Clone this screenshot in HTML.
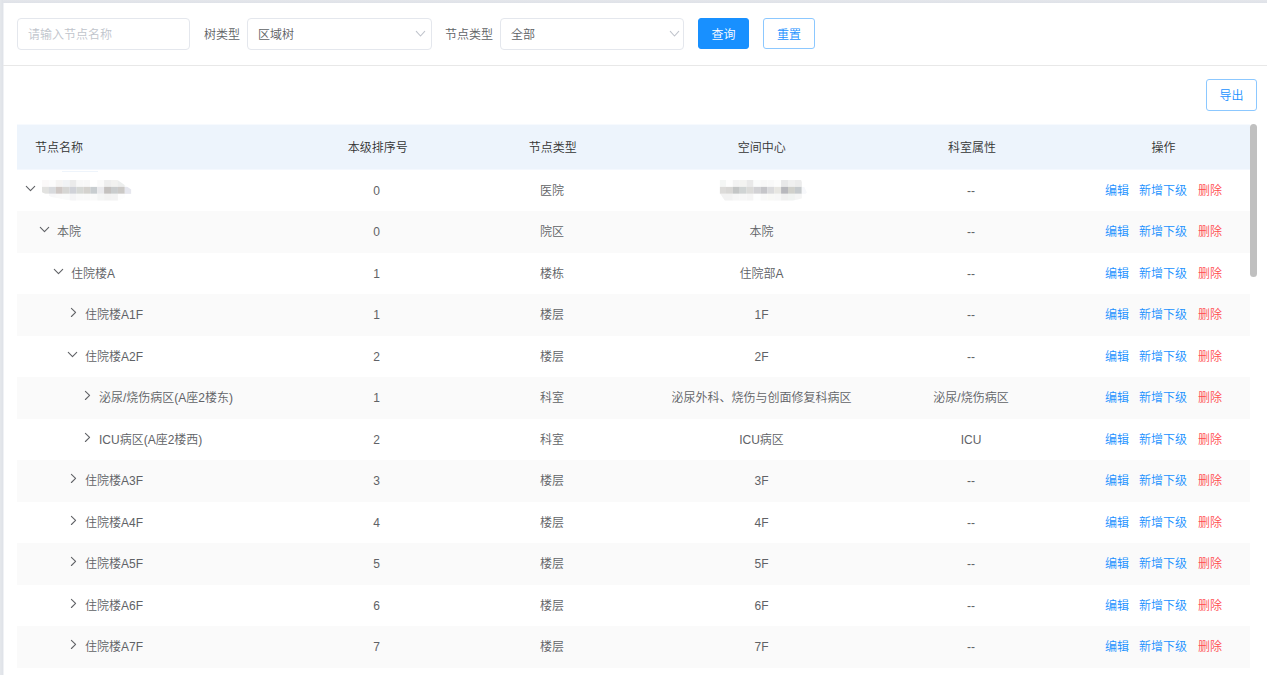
<!DOCTYPE html><html lang="zh-CN"><head><meta charset="utf-8"><title>节点管理</title><style>
*{box-sizing:border-box;margin:0;padding:0}
html,body{width:1267px;height:675px;overflow:hidden;background:#fff}
body{position:relative;font-family:"Liberation Sans","Noto Sans CJK SC DemiLight","Noto Sans CJK SC",sans-serif;font-size:12px;color:#606266;line-height:1}
.abs{position:absolute}
.topbar{left:0;top:0;width:1267px;height:3px;background:linear-gradient(to bottom,#e4e6eb,#dfe2e8)}
.leftbar{left:0;top:0;width:3px;height:675px;background:linear-gradient(to right,#e5e8ec,#dfe2e8)}
.leftbar2{left:3px;top:3px;width:1px;height:672px;background:#f0f2f5}
.inp{top:18px;height:32px;padding-top:1px;border:1px solid #e4e7ed;border-radius:4px;background:#fff;line-height:30px;padding-left:10px;color:#606266;white-space:nowrap}
.ph{color:#c0c4cc}
.lbl{top:19px;height:32px;line-height:32px;color:#606266;white-space:nowrap}
.btn{height:32px;padding-top:1px;border-radius:3px;line-height:30px;text-align:center;white-space:nowrap}
.btn.pri{background:#1890ff;border:1px solid #1890ff;color:#fff}
.btn.pl{background:#fff;border:1px solid #8cc8ff;color:#1890ff}
.divider{left:3px;top:65px;width:1264px;height:1px;background:#e8e8e8}
.th{top:125.5px;height:45px;line-height:45px;color:#333;white-space:nowrap}
.thbg{left:17px;top:125px;width:1233px;height:44px;background:#edf4fc}
.row{left:17px;width:1233px;height:41.5px}
.row.odd{background:#fafafa}
.c{height:41.5px;line-height:41.5px;text-align:center;white-space:nowrap;top:1.4px}
.nm{height:41.5px;line-height:41.5px;white-space:nowrap;top:1.4px}
.a{color:#1890ff}
.d{color:#ff4d4f}
.thumb{left:1250px;top:124px;width:7px;height:153px;border-radius:3.5px;background:#c0c0c0}
svg{position:absolute;overflow:visible}
</style></head><body>
<div class="abs topbar"></div><div class="abs leftbar"></div><div class="abs leftbar2"></div>
<div class="abs inp ph" style="left:17px;width:173px">请输入节点名称</div>
<div class="abs lbl" style="left:204px">树类型</div>
<div class="abs inp" style="left:247px;width:185px">区域树</div>
<svg class="abs" style="left:416.2px;top:30.7px" width="9" height="6" viewBox="0 0 9 6"><path d="M0.3 0.4 L4.5 5 L8.7 0.4" fill="none" stroke="#c0c4cc" stroke-width="1.1" stroke-linecap="round" stroke-linejoin="round"/></svg>
<div class="abs lbl" style="left:445px">节点类型</div>
<div class="abs inp" style="left:500px;width:184px">全部</div>
<svg class="abs" style="left:669.7px;top:30.7px" width="9" height="6" viewBox="0 0 9 6"><path d="M0.3 0.4 L4.5 5 L8.7 0.4" fill="none" stroke="#c0c4cc" stroke-width="1.1" stroke-linecap="round" stroke-linejoin="round"/></svg>
<div class="abs btn pri" style="left:698px;top:18px;width:51px;height:31px;line-height:30px">查询</div>
<div class="abs btn pl" style="left:763px;top:18px;width:52px;height:31px;line-height:30px">重置</div>
<div class="abs divider"></div>
<div class="abs btn pl" style="left:1206px;top:79px;width:51px">导出</div>
<div class="abs thbg"></div><div class="abs" style="left:17px;top:124px;width:1233px;height:1px;background:#f7fafe"></div><div class="abs" style="left:17px;top:169px;width:1233px;height:1px;background:#f4f8fe"></div>
<div class="abs th" style="left:35px">节点名称</div>
<div class="abs th" style="left:307.0px;width:141.5px;text-align:center">本级排序号</div>
<div class="abs th" style="left:448.0px;width:209.5px;text-align:center">节点类型</div>
<div class="abs th" style="left:657.0px;width:209.5px;text-align:center">空间中心</div>
<div class="abs th" style="left:867.25px;width:209.5px;text-align:center">科室属性</div>
<div class="abs th" style="left:1076.25px;width:174.5px;text-align:center">操作</div>
<div class="abs row" style="top:169.5px">
<svg class="abs" style="left:8.5px;top:16px" width="9" height="5.6" viewBox="0 0 9 5.6"><path d="M0.3 0.4 L4.5 4.6 L8.7 0.4" fill="none" stroke="#606266" stroke-width="1.1" stroke-linecap="round" stroke-linejoin="round"/></svg>
<div class="abs c" style="left:288.75px;width:141.5px">0</div>
<div class="abs c" style="left:430.25px;width:209.5px">医院</div>
<div class="abs c" style="left:849.25px;width:209.5px">--</div>
<div class="abs c" style="left:1059.25px;width:174.5px"><span class="a">编辑</span><span class="a" style="margin-left:10px">新增下级</span><span class="d" style="margin-left:11px">删除</span></div>
</div>
<div class="abs row odd" style="top:211.0px">
<svg class="abs" style="left:22.5px;top:16px" width="9" height="5.6" viewBox="0 0 9 5.6"><path d="M0.3 0.4 L4.5 4.6 L8.7 0.4" fill="none" stroke="#606266" stroke-width="1.1" stroke-linecap="round" stroke-linejoin="round"/></svg>
<div class="abs nm" style="left:40.0px">本院</div>
<div class="abs c" style="left:288.75px;width:141.5px">0</div>
<div class="abs c" style="left:430.25px;width:209.5px">院区</div>
<div class="abs c" style="left:639.75px;width:209.5px">本院</div>
<div class="abs c" style="left:849.25px;width:209.5px">--</div>
<div class="abs c" style="left:1059.25px;width:174.5px"><span class="a">编辑</span><span class="a" style="margin-left:10px">新增下级</span><span class="d" style="margin-left:11px">删除</span></div>
</div>
<div class="abs row" style="top:252.5px">
<svg class="abs" style="left:36.5px;top:16px" width="9" height="5.6" viewBox="0 0 9 5.6"><path d="M0.3 0.4 L4.5 4.6 L8.7 0.4" fill="none" stroke="#606266" stroke-width="1.1" stroke-linecap="round" stroke-linejoin="round"/></svg>
<div class="abs nm" style="left:54.0px">住院楼A</div>
<div class="abs c" style="left:288.75px;width:141.5px">1</div>
<div class="abs c" style="left:430.25px;width:209.5px">楼栋</div>
<div class="abs c" style="left:639.75px;width:209.5px">住院部A</div>
<div class="abs c" style="left:849.25px;width:209.5px">--</div>
<div class="abs c" style="left:1059.25px;width:174.5px"><span class="a">编辑</span><span class="a" style="margin-left:10px">新增下级</span><span class="d" style="margin-left:11px">删除</span></div>
</div>
<div class="abs row odd" style="top:294.0px">
<svg class="abs" style="left:54.1px;top:14.2px" width="5.6" height="8.8" viewBox="0 0 5.6 8.8"><path d="M0.4 0.3 L4.6 4.4 L0.4 8.5" fill="none" stroke="#606266" stroke-width="1.1" stroke-linecap="round" stroke-linejoin="round"/></svg>
<div class="abs nm" style="left:68.0px">住院楼A1F</div>
<div class="abs c" style="left:288.75px;width:141.5px">1</div>
<div class="abs c" style="left:430.25px;width:209.5px">楼层</div>
<div class="abs c" style="left:639.75px;width:209.5px">1F</div>
<div class="abs c" style="left:849.25px;width:209.5px">--</div>
<div class="abs c" style="left:1059.25px;width:174.5px"><span class="a">编辑</span><span class="a" style="margin-left:10px">新增下级</span><span class="d" style="margin-left:11px">删除</span></div>
</div>
<div class="abs row" style="top:335.5px">
<svg class="abs" style="left:50.5px;top:16px" width="9" height="5.6" viewBox="0 0 9 5.6"><path d="M0.3 0.4 L4.5 4.6 L8.7 0.4" fill="none" stroke="#606266" stroke-width="1.1" stroke-linecap="round" stroke-linejoin="round"/></svg>
<div class="abs nm" style="left:68.0px">住院楼A2F</div>
<div class="abs c" style="left:288.75px;width:141.5px">2</div>
<div class="abs c" style="left:430.25px;width:209.5px">楼层</div>
<div class="abs c" style="left:639.75px;width:209.5px">2F</div>
<div class="abs c" style="left:849.25px;width:209.5px">--</div>
<div class="abs c" style="left:1059.25px;width:174.5px"><span class="a">编辑</span><span class="a" style="margin-left:10px">新增下级</span><span class="d" style="margin-left:11px">删除</span></div>
</div>
<div class="abs row odd" style="top:377.0px">
<svg class="abs" style="left:68.1px;top:14.2px" width="5.6" height="8.8" viewBox="0 0 5.6 8.8"><path d="M0.4 0.3 L4.6 4.4 L0.4 8.5" fill="none" stroke="#606266" stroke-width="1.1" stroke-linecap="round" stroke-linejoin="round"/></svg>
<div class="abs nm" style="left:82.0px">泌尿/烧伤病区(A座2楼东)</div>
<div class="abs c" style="left:288.75px;width:141.5px">1</div>
<div class="abs c" style="left:430.25px;width:209.5px">科室</div>
<div class="abs c" style="left:639.75px;width:209.5px">泌尿外科、烧伤与创面修复科病区</div>
<div class="abs c" style="left:849.25px;width:209.5px">泌尿/烧伤病区</div>
<div class="abs c" style="left:1059.25px;width:174.5px"><span class="a">编辑</span><span class="a" style="margin-left:10px">新增下级</span><span class="d" style="margin-left:11px">删除</span></div>
</div>
<div class="abs row" style="top:418.5px">
<svg class="abs" style="left:68.1px;top:14.2px" width="5.6" height="8.8" viewBox="0 0 5.6 8.8"><path d="M0.4 0.3 L4.6 4.4 L0.4 8.5" fill="none" stroke="#606266" stroke-width="1.1" stroke-linecap="round" stroke-linejoin="round"/></svg>
<div class="abs nm" style="left:82.0px">ICU病区(A座2楼西)</div>
<div class="abs c" style="left:288.75px;width:141.5px">2</div>
<div class="abs c" style="left:430.25px;width:209.5px">科室</div>
<div class="abs c" style="left:639.75px;width:209.5px">ICU病区</div>
<div class="abs c" style="left:849.25px;width:209.5px">ICU</div>
<div class="abs c" style="left:1059.25px;width:174.5px"><span class="a">编辑</span><span class="a" style="margin-left:10px">新增下级</span><span class="d" style="margin-left:11px">删除</span></div>
</div>
<div class="abs row odd" style="top:460.0px">
<svg class="abs" style="left:54.1px;top:14.2px" width="5.6" height="8.8" viewBox="0 0 5.6 8.8"><path d="M0.4 0.3 L4.6 4.4 L0.4 8.5" fill="none" stroke="#606266" stroke-width="1.1" stroke-linecap="round" stroke-linejoin="round"/></svg>
<div class="abs nm" style="left:68.0px">住院楼A3F</div>
<div class="abs c" style="left:288.75px;width:141.5px">3</div>
<div class="abs c" style="left:430.25px;width:209.5px">楼层</div>
<div class="abs c" style="left:639.75px;width:209.5px">3F</div>
<div class="abs c" style="left:849.25px;width:209.5px">--</div>
<div class="abs c" style="left:1059.25px;width:174.5px"><span class="a">编辑</span><span class="a" style="margin-left:10px">新增下级</span><span class="d" style="margin-left:11px">删除</span></div>
</div>
<div class="abs row" style="top:501.5px">
<svg class="abs" style="left:54.1px;top:14.2px" width="5.6" height="8.8" viewBox="0 0 5.6 8.8"><path d="M0.4 0.3 L4.6 4.4 L0.4 8.5" fill="none" stroke="#606266" stroke-width="1.1" stroke-linecap="round" stroke-linejoin="round"/></svg>
<div class="abs nm" style="left:68.0px">住院楼A4F</div>
<div class="abs c" style="left:288.75px;width:141.5px">4</div>
<div class="abs c" style="left:430.25px;width:209.5px">楼层</div>
<div class="abs c" style="left:639.75px;width:209.5px">4F</div>
<div class="abs c" style="left:849.25px;width:209.5px">--</div>
<div class="abs c" style="left:1059.25px;width:174.5px"><span class="a">编辑</span><span class="a" style="margin-left:10px">新增下级</span><span class="d" style="margin-left:11px">删除</span></div>
</div>
<div class="abs row odd" style="top:543.0px">
<svg class="abs" style="left:54.1px;top:14.2px" width="5.6" height="8.8" viewBox="0 0 5.6 8.8"><path d="M0.4 0.3 L4.6 4.4 L0.4 8.5" fill="none" stroke="#606266" stroke-width="1.1" stroke-linecap="round" stroke-linejoin="round"/></svg>
<div class="abs nm" style="left:68.0px">住院楼A5F</div>
<div class="abs c" style="left:288.75px;width:141.5px">5</div>
<div class="abs c" style="left:430.25px;width:209.5px">楼层</div>
<div class="abs c" style="left:639.75px;width:209.5px">5F</div>
<div class="abs c" style="left:849.25px;width:209.5px">--</div>
<div class="abs c" style="left:1059.25px;width:174.5px"><span class="a">编辑</span><span class="a" style="margin-left:10px">新增下级</span><span class="d" style="margin-left:11px">删除</span></div>
</div>
<div class="abs row" style="top:584.5px">
<svg class="abs" style="left:54.1px;top:14.2px" width="5.6" height="8.8" viewBox="0 0 5.6 8.8"><path d="M0.4 0.3 L4.6 4.4 L0.4 8.5" fill="none" stroke="#606266" stroke-width="1.1" stroke-linecap="round" stroke-linejoin="round"/></svg>
<div class="abs nm" style="left:68.0px">住院楼A6F</div>
<div class="abs c" style="left:288.75px;width:141.5px">6</div>
<div class="abs c" style="left:430.25px;width:209.5px">楼层</div>
<div class="abs c" style="left:639.75px;width:209.5px">6F</div>
<div class="abs c" style="left:849.25px;width:209.5px">--</div>
<div class="abs c" style="left:1059.25px;width:174.5px"><span class="a">编辑</span><span class="a" style="margin-left:10px">新增下级</span><span class="d" style="margin-left:11px">删除</span></div>
</div>
<div class="abs row odd" style="top:626.0px">
<svg class="abs" style="left:54.1px;top:14.2px" width="5.6" height="8.8" viewBox="0 0 5.6 8.8"><path d="M0.4 0.3 L4.6 4.4 L0.4 8.5" fill="none" stroke="#606266" stroke-width="1.1" stroke-linecap="round" stroke-linejoin="round"/></svg>
<div class="abs nm" style="left:68.0px">住院楼A7F</div>
<div class="abs c" style="left:288.75px;width:141.5px">7</div>
<div class="abs c" style="left:430.25px;width:209.5px">楼层</div>
<div class="abs c" style="left:639.75px;width:209.5px">7F</div>
<div class="abs c" style="left:849.25px;width:209.5px">--</div>
<div class="abs c" style="left:1059.25px;width:174.5px"><span class="a">编辑</span><span class="a" style="margin-left:10px">新增下级</span><span class="d" style="margin-left:11px">删除</span></div>
</div>
<svg class="abs" style="left:41.5px;top:180px;clip-path:polygon(0 0,76px 0,89.7px 9.5px,89.7px 14.5px,77px 20.7px,30px 20.7px,10px 17px,0 12px)" width="89.70" height="20.70" viewBox="0 0 89.70 20.70"><rect x="0.00" y="0.00" width="6.95" height="6.95" fill="#fbf9f9"/><rect x="6.90" y="0.00" width="6.95" height="6.95" fill="#fcfcfc"/><rect x="13.80" y="0.00" width="6.95" height="6.95" fill="#f5f4f3"/><rect x="20.70" y="0.00" width="6.95" height="6.95" fill="#f1f3f5"/><rect x="27.60" y="0.00" width="6.95" height="6.95" fill="#ebebeb"/><rect x="34.50" y="0.00" width="6.95" height="6.95" fill="#f8f8f8"/><rect x="41.40" y="0.00" width="6.95" height="6.95" fill="#f8f8f8"/><rect x="48.30" y="0.00" width="6.95" height="6.95" fill="#ffffff"/><rect x="55.20" y="0.00" width="6.95" height="6.95" fill="#fafafa"/><rect x="62.10" y="0.00" width="6.95" height="6.95" fill="#eeeeee"/><rect x="69.00" y="0.00" width="6.95" height="6.95" fill="#f2f2f0"/><rect x="75.90" y="0.00" width="6.95" height="6.95" fill="#eceeed"/><rect x="82.80" y="0.00" width="6.95" height="6.95" fill="#fbfcfc"/><rect x="0.00" y="6.90" width="6.95" height="6.95" fill="#e2e2e0"/><rect x="6.90" y="6.90" width="6.95" height="6.95" fill="#d8dadd"/><rect x="13.80" y="6.90" width="6.95" height="6.95" fill="#cfc8c5"/><rect x="20.70" y="6.90" width="6.95" height="6.95" fill="#d6d6d4"/><rect x="27.60" y="6.90" width="6.95" height="6.95" fill="#d0d2d8"/><rect x="34.50" y="6.90" width="6.95" height="6.95" fill="#d6d8d5"/><rect x="41.40" y="6.90" width="6.95" height="6.95" fill="#d4d2ce"/><rect x="48.30" y="6.90" width="6.95" height="6.95" fill="#c8cdd0"/><rect x="55.20" y="6.90" width="6.95" height="6.95" fill="#e9e9ec"/><rect x="62.10" y="6.90" width="6.95" height="6.95" fill="#c4c1bf"/><rect x="69.00" y="6.90" width="6.95" height="6.95" fill="#c9cccd"/><rect x="75.90" y="6.90" width="6.95" height="6.95" fill="#cbc9c6"/><rect x="82.80" y="6.90" width="6.95" height="6.95" fill="#e6e7ee"/><rect x="0.00" y="13.80" width="6.95" height="6.95" fill="#ffffff"/><rect x="6.90" y="13.80" width="6.95" height="6.95" fill="#f8f8f9"/><rect x="13.80" y="13.80" width="6.95" height="6.95" fill="#fafafa"/><rect x="20.70" y="13.80" width="6.95" height="6.95" fill="#fafbfb"/><rect x="27.60" y="13.80" width="6.95" height="6.95" fill="#f5f5f6"/><rect x="34.50" y="13.80" width="6.95" height="6.95" fill="#f9f9f9"/><rect x="41.40" y="13.80" width="6.95" height="6.95" fill="#f9f9f9"/><rect x="48.30" y="13.80" width="6.95" height="6.95" fill="#fafafa"/><rect x="55.20" y="13.80" width="6.95" height="6.95" fill="#f4f5f5"/><rect x="62.10" y="13.80" width="6.95" height="6.95" fill="#f2f2f2"/><rect x="69.00" y="13.80" width="6.95" height="6.95" fill="#f3f3f3"/><rect x="75.90" y="13.80" width="6.95" height="6.95" fill="#fdfdfd"/></svg>
<svg class="abs" style="left:718.7px;top:180px;clip-path:polygon(1.2px 0,82.4px 0,88.2px 12.4px,83px 18.6px,74px 20.7px,6.2px 20.7px,1.2px 13.2px)" width="89.70" height="20.70" viewBox="0 0 89.70 20.70"><rect x="0.00" y="0.00" width="6.95" height="6.95" fill="#f4f6f5"/><rect x="6.90" y="0.00" width="6.95" height="6.95" fill="#fdfdfd"/><rect x="13.80" y="0.00" width="6.95" height="6.95" fill="#f3f3f3"/><rect x="20.70" y="0.00" width="6.95" height="6.95" fill="#f3f3f1"/><rect x="27.60" y="0.00" width="6.95" height="6.95" fill="#e9e9e9"/><rect x="34.50" y="0.00" width="6.95" height="6.95" fill="#fafbfb"/><rect x="41.40" y="0.00" width="6.95" height="6.95" fill="#f8f8f8"/><rect x="48.30" y="0.00" width="6.95" height="6.95" fill="#f9f9f9"/><rect x="55.20" y="0.00" width="6.95" height="6.95" fill="#fcfcfc"/><rect x="62.10" y="0.00" width="6.95" height="6.95" fill="#e8e8e9"/><rect x="69.00" y="0.00" width="6.95" height="6.95" fill="#f0f0f0"/><rect x="75.90" y="0.00" width="6.95" height="6.95" fill="#ececec"/><rect x="0.00" y="6.90" width="6.95" height="6.95" fill="#dcdbd9"/><rect x="6.90" y="6.90" width="6.95" height="6.95" fill="#d8d7d5"/><rect x="13.80" y="6.90" width="6.95" height="6.95" fill="#c4c6c6"/><rect x="20.70" y="6.90" width="6.95" height="6.95" fill="#d0d4d4"/><rect x="27.60" y="6.90" width="6.95" height="6.95" fill="#dbdbd9"/><rect x="34.50" y="6.90" width="6.95" height="6.95" fill="#d2d2d5"/><rect x="41.40" y="6.90" width="6.95" height="6.95" fill="#c5c5c9"/><rect x="48.30" y="6.90" width="6.95" height="6.95" fill="#dadadc"/><rect x="55.20" y="6.90" width="6.95" height="6.95" fill="#e7e6e2"/><rect x="62.10" y="6.90" width="6.95" height="6.95" fill="#b8b8bd"/><rect x="69.00" y="6.90" width="6.95" height="6.95" fill="#d0d0cb"/><rect x="75.90" y="6.90" width="6.95" height="6.95" fill="#c6cacd"/><rect x="82.80" y="6.90" width="6.95" height="6.95" fill="#f7f8fb"/><rect x="0.00" y="13.80" width="6.95" height="6.95" fill="#f2f2f2"/><rect x="6.90" y="13.80" width="6.95" height="6.95" fill="#f2f2f2"/><rect x="13.80" y="13.80" width="6.95" height="6.95" fill="#f6f6f6"/><rect x="20.70" y="13.80" width="6.95" height="6.95" fill="#f7f7f7"/><rect x="27.60" y="13.80" width="6.95" height="6.95" fill="#f5f5f5"/><rect x="34.50" y="13.80" width="6.95" height="6.95" fill="#fdfefe"/><rect x="41.40" y="13.80" width="6.95" height="6.95" fill="#f8f8f8"/><rect x="48.30" y="13.80" width="6.95" height="6.95" fill="#f8f8f6"/><rect x="55.20" y="13.80" width="6.95" height="6.95" fill="#f7f7f7"/><rect x="62.10" y="13.80" width="6.95" height="6.95" fill="#f0f0f0"/><rect x="69.00" y="13.80" width="6.95" height="6.95" fill="#f1f3f2"/><rect x="75.90" y="13.80" width="6.95" height="6.95" fill="#f5f5f5"/></svg>
<div class="abs" style="left:62px;top:171px;width:36px;height:1px;background:#eef4fb"></div>
<div class="abs thumb"></div>
</body></html>
